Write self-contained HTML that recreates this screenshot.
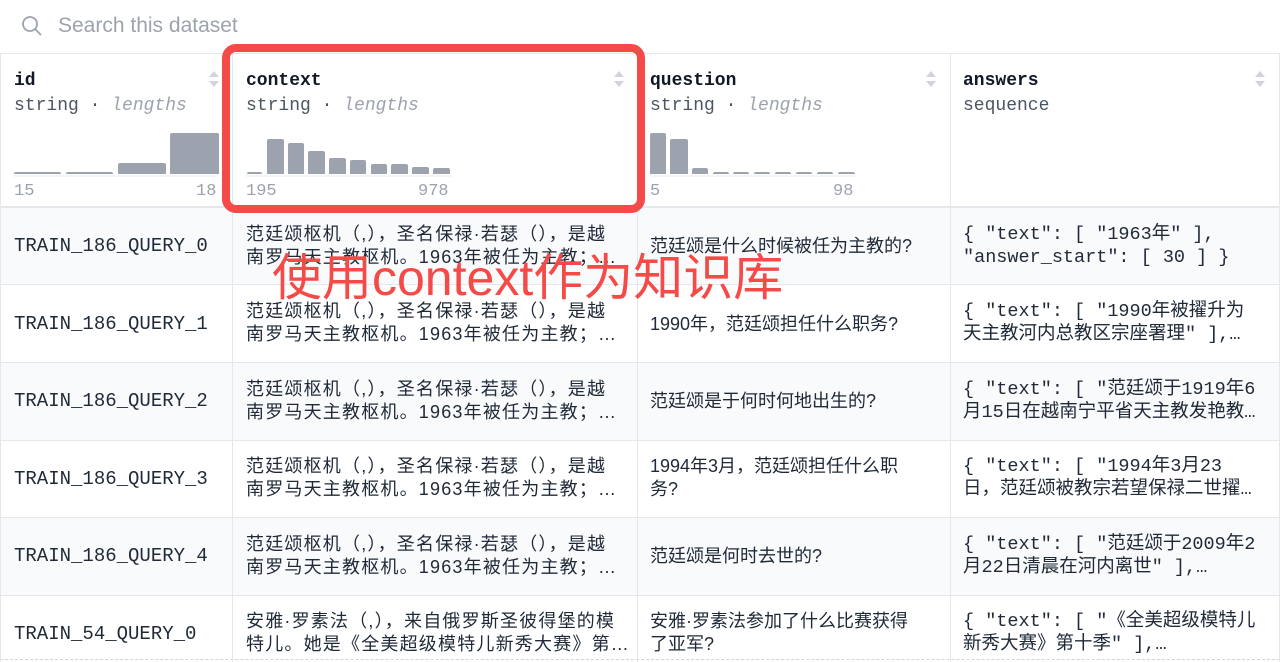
<!DOCTYPE html>
<html><head><meta charset="utf-8"><style>
*{margin:0;padding:0;box-sizing:border-box}
body{width:1280px;height:662px;overflow:hidden;background:#fff;position:relative;font-family:"Liberation Sans","Noto Sans CJK SC",sans-serif;color:#1f2937}
.a{position:absolute}
.mono{font-family:"Liberation Mono","Noto Sans CJK SC",monospace}
.vl{position:absolute;width:1px;background:#e5e7eb;top:54px;height:608px}
.hl{position:absolute;height:1px;background:#e5e7eb;left:0;width:1280px}
.hd{font-weight:bold;font-size:18px;color:#111827}
.ty{font-size:18px;color:#4b5563}
.ty i{color:#9ca3af}
.bar{position:absolute;background:#9ca3af;border-radius:2px 2px 0 0}
.ax{position:absolute;font-size:17px;color:#9ca3af}
.cell{position:absolute;font-size:18px;line-height:23px;color:#1f2937;white-space:nowrap}
.cell.mono{font-size:18.5px}
.ctx{letter-spacing:1.2px}
.sort{position:absolute;width:12px;height:20px}
</style></head><body>
<svg class="a" style="left:21px;top:15px" width="22" height="22" viewBox="0 0 22 22"><circle cx="9" cy="9" r="7" fill="none" stroke="#9ca3af" stroke-width="1.8"/><line x1="14" y1="14" x2="20" y2="20" stroke="#9ca3af" stroke-width="1.8"/></svg>
<div class="a" style="left:58px;top:14px;font-size:21px;color:#9ca3af">Search this dataset</div>
<div class="hl" style="top:53px"></div>
<div class="a" style="left:0;top:207px;width:1280px;height:77px;background:#f9fafb"></div>
<div class="a" style="left:0;top:362px;width:1280px;height:78px;background:#f9fafb"></div>
<div class="a" style="left:0;top:517px;width:1280px;height:78px;background:#f9fafb"></div>
<div class="hl" style="top:206px;height:2px"></div>
<div class="hl" style="top:284px"></div>
<div class="hl" style="top:362px"></div>
<div class="hl" style="top:440px"></div>
<div class="hl" style="top:517px"></div>
<div class="hl" style="top:595px"></div>
<div class="a" style="left:0;top:659px;width:1280px;border-top:1px dashed #d1d5db"></div>
<div class="vl" style="left:232px"></div>
<div class="vl" style="left:637px"></div>
<div class="vl" style="left:950px"></div>
<div class="vl" style="left:1279px"></div>
<div class="vl" style="left:0"></div>
<div class="a mono hd" style="left:14px;top:71px">id</div>
<div class="a mono ty" style="left:14px;top:96px">string · <i>lengths</i></div>
<div class="a mono hd" style="left:246px;top:71px">context</div>
<div class="a mono ty" style="left:246px;top:96px">string · <i>lengths</i></div>
<div class="a mono hd" style="left:650px;top:71px">question</div>
<div class="a mono ty" style="left:650px;top:96px">string · <i>lengths</i></div>
<div class="a mono hd" style="left:963px;top:71px">answers</div>
<div class="a mono ty" style="left:963px;top:96px">sequence</div>
<svg class="sort" style="left:208px;top:69px" viewBox="0 0 12 20"><path d="M1 8L6 2L11 8Z M1 12L6 18L11 12Z" fill="#d1d5db"/></svg>
<svg class="sort" style="left:613px;top:69px" viewBox="0 0 12 20"><path d="M1 8L6 2L11 8Z M1 12L6 18L11 12Z" fill="#d1d5db"/></svg>
<svg class="sort" style="left:925px;top:69px" viewBox="0 0 12 20"><path d="M1 8L6 2L11 8Z M1 12L6 18L11 12Z" fill="#d1d5db"/></svg>
<svg class="sort" style="left:1254px;top:69px" viewBox="0 0 12 20"><path d="M1 8L6 2L11 8Z M1 12L6 18L11 12Z" fill="#d1d5db"/></svg>
<div class="a" style="left:14px;top:175px;width:204px;height:2px;background:#f3f4f6"></div>
<div class="bar" style="left:14px;top:172px;width:47px;height:2px"></div>
<div class="bar" style="left:66px;top:172px;width:47px;height:2px"></div>
<div class="bar" style="left:118px;top:163px;width:48px;height:11px"></div>
<div class="bar" style="left:170px;top:133px;width:49px;height:41px"></div>
<div class="ax mono" style="left:14px;top:182px">15</div>
<div class="ax mono" style="left:196px;top:182px">18</div>
<div class="a" style="left:246px;top:175px;width:205px;height:2px;background:#f3f4f6"></div>
<div class="bar" style="left:247px;top:172px;width:15px;height:2px"></div>
<div class="bar" style="left:267px;top:139px;width:17px;height:35px"></div>
<div class="bar" style="left:288px;top:143px;width:16px;height:31px"></div>
<div class="bar" style="left:308px;top:151px;width:17px;height:23px"></div>
<div class="bar" style="left:329px;top:158px;width:17px;height:16px"></div>
<div class="bar" style="left:350px;top:160px;width:16px;height:14px"></div>
<div class="bar" style="left:371px;top:164px;width:16px;height:10px"></div>
<div class="bar" style="left:391px;top:164px;width:17px;height:10px"></div>
<div class="bar" style="left:412px;top:167px;width:17px;height:7px"></div>
<div class="bar" style="left:433px;top:168px;width:17px;height:6px"></div>
<div class="ax mono" style="left:246px;top:182px">195</div>
<div class="ax mono" style="left:418px;top:182px">978</div>
<div class="a" style="left:650px;top:175px;width:205px;height:2px;background:#f3f4f6"></div>
<div class="bar" style="left:650px;top:133px;width:16px;height:41px"></div>
<div class="bar" style="left:670px;top:139px;width:18px;height:35px"></div>
<div class="bar" style="left:692px;top:168px;width:16px;height:6px"></div>
<div class="bar" style="left:713px;top:172px;width:16px;height:2px"></div>
<div class="bar" style="left:733px;top:172px;width:16px;height:2px"></div>
<div class="bar" style="left:754px;top:172px;width:16px;height:2px"></div>
<div class="bar" style="left:775px;top:172px;width:16px;height:2px"></div>
<div class="bar" style="left:796px;top:172px;width:16px;height:2px"></div>
<div class="bar" style="left:817px;top:172px;width:16px;height:2px"></div>
<div class="bar" style="left:838px;top:172px;width:17px;height:2px"></div>
<div class="ax mono" style="left:650px;top:182px">5</div>
<div class="ax mono" style="left:833px;top:182px">98</div>
<div class="cell mono" style="left:14px;top:235px;font-size:19px">TRAIN_186_QUERY_0</div>
<div class="cell mono" style="left:14px;top:313px;font-size:19px">TRAIN_186_QUERY_1</div>
<div class="cell mono" style="left:14px;top:390px;font-size:19px">TRAIN_186_QUERY_2</div>
<div class="cell mono" style="left:14px;top:468px;font-size:19px">TRAIN_186_QUERY_3</div>
<div class="cell mono" style="left:14px;top:545px;font-size:19px">TRAIN_186_QUERY_4</div>
<div class="cell mono" style="left:14px;top:623px;font-size:19px">TRAIN_54_QUERY_0</div>

<div class="cell ctx" style="left:246px;top:223px">范廷颂枢机（,），圣名保禄·若瑟（），是越<br>南罗马天主教枢机。1963年被任为主教；…</div>
<div class="cell ctx" style="left:246px;top:300px">范廷颂枢机（,），圣名保禄·若瑟（），是越<br>南罗马天主教枢机。1963年被任为主教；…</div>
<div class="cell ctx" style="left:246px;top:378px">范廷颂枢机（,），圣名保禄·若瑟（），是越<br>南罗马天主教枢机。1963年被任为主教；…</div>
<div class="cell ctx" style="left:246px;top:455px">范廷颂枢机（,），圣名保禄·若瑟（），是越<br>南罗马天主教枢机。1963年被任为主教；…</div>
<div class="cell ctx" style="left:246px;top:533px">范廷颂枢机（,），圣名保禄·若瑟（），是越<br>南罗马天主教枢机。1963年被任为主教；…</div>
<div class="cell ctx" style="left:246px;top:610px">安雅·罗素法（,），来自俄罗斯圣彼得堡的模<br>特儿。她是《全美超级模特儿新秀大赛》第…</div>

<div class="cell" style="left:650px;top:235px">范廷颂是什么时候被任为主教的?</div>
<div class="cell" style="left:650px;top:313px">1990年，范廷颂担任什么职务?</div>
<div class="cell" style="left:650px;top:390px">范廷颂是于何时何地出生的?</div>
<div class="cell" style="left:650px;top:455px">1994年3月，范廷颂担任什么职<br>务?</div>
<div class="cell" style="left:650px;top:545px">范廷颂是何时去世的?</div>
<div class="cell" style="left:650px;top:610px">安雅·罗素法参加了什么比赛获得<br>了亚军?</div>

<div class="cell mono" style="left:963px;top:223px">{ "text": [ "1963年" ],<br>"answer_start": [ 30 ] }</div>
<div class="cell mono" style="left:963px;top:300px">{ "text": [ "1990年被擢升为<br>天主教河内总教区宗座署理" ],…</div>
<div class="cell mono" style="left:963px;top:378px">{ "text": [ "范廷颂于1919年6<br>月15日在越南宁平省天主教发艳教…</div>
<div class="cell mono" style="left:963px;top:455px">{ "text": [ "1994年3月23<br>日，范廷颂被教宗若望保禄二世擢…</div>
<div class="cell mono" style="left:963px;top:533px">{ "text": [ "范廷颂于2009年2<br>月22日清晨在河内离世" ],…</div>
<div class="cell mono" style="left:963px;top:610px">{ "text": [ "《全美超级模特儿<br>新秀大赛》第十季" ],…</div>

<div class="a" style="left:222px;top:44px;width:423px;height:169px;border:8px solid #f44a48;border-radius:14px"></div>
<div class="a" style="left:272px;top:247px;font-size:50px;line-height:62px;color:#f44a48;white-space:nowrap">使用context作为知识库</div>
</body></html>
